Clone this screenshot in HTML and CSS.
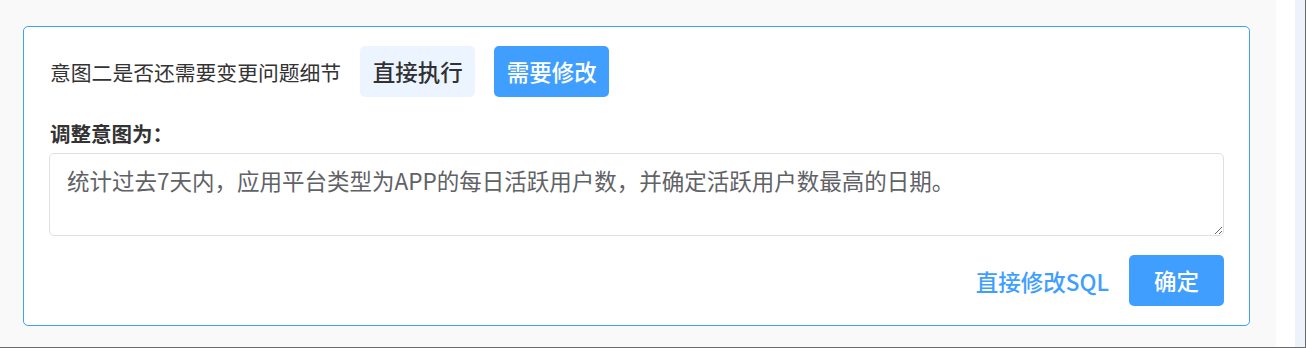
FILE: index.html
```html
<!DOCTYPE html>
<html lang="zh-CN">
<head>
<meta charset="utf-8">
<title>意图确认</title>
<link rel="stylesheet" href="styles.css">
</head>
<body>
<div class="screen">
  <main class="main">
    <section class="card">
      <div class="choice-row">
        <span class="question">意图二是否还需要变更问题细节</span>
        <button class="btn btn-light" type="button">直接执行</button>
        <button class="btn btn-primary" type="button">需要修改</button>
      </div>
      <label class="field-label" for="intent">调整意图为：</label>
      <textarea id="intent" class="intent">统计过去7天内，应用平台类型为APP的每日活跃用户数，并确定活跃用户数最高的日期。</textarea>
      <div class="actions">
        <a class="link" href="#">直接修改SQL</a>
        <button class="btn btn-primary btn-confirm" type="button">确定</button>
      </div>
    </section>
  </main>
  <aside class="side">
    <div class="side-gap"></div>
    <div class="side-bar"></div>
  </aside>
</div>
</body>
</html>
```

FILE: styles.css
```css
* {
  box-sizing: border-box;
}

html, body {
  margin: 0;
  padding: 0;
  background: #ffffff;
}

body {
  font-family: "Noto Sans CJK SC", "Noto Sans", "Liberation Sans", sans-serif;
  color: #303133;
}

.screen {
  width: 1306px;
  height: 348px;
  display: flex;
  border-right: 1px solid #6b6b6b;
  border-bottom: 1px solid #6b6b6b;
  overflow: hidden;
}

.main {
  width: 1276px;
  height: 100%;
  background: #f9f9f9;
  padding: 26px 0 0 23px;
}

.side {
  display: flex;
  height: 100%;
}

.side-gap {
  width: 19px;
  background: #ffffff;
}

.side-bar {
  width: 10px;
  background: #eef2fb;
}

.card {
  width: 1227px;
  height: 300px;
  background: #ffffff;
  border: 1px solid #409eff;
  border-radius: 5px;
  padding: 19px 25px;
  display: flex;
  flex-direction: column;
}

.choice-row {
  display: flex;
  align-items: center;
  height: 51px;
}

.question {
  font-size: 20.8px;
  color: #333333;
  margin-right: 19px;
  margin-left: 1px;
}

.btn {
  height: 51px;
  padding: 0 12.5px;
  border: none;
  border-radius: 5px;
  font-family: inherit;
  font-size: 22.5px;
  font-weight: 500;
  line-height: 51px;
  cursor: pointer;
}

.btn-light {
  background: #ecf5ff;
  color: #303133;
  margin-right: 19px;
}

.btn-primary {
  background: #409eff;
  color: #ffffff;
}

.field-label {
  font-size: 20.5px;
  font-weight: 700;
  color: #333333;
  line-height: 28px;
  margin: 22px 0 6px 1px;
}

.intent {
  width: 100%;
  height: 83px;
  border: 1px solid #dcdfe6;
  border-radius: 5px;
  padding: 9px 17px;
  font-family: inherit;
  font-size: 22.5px;
  line-height: 34px;
  color: #606266;
  resize: vertical;
  outline: none;
}

.actions {
  display: flex;
  justify-content: flex-end;
  align-items: center;
  gap: 20px;
  margin-top: 19px;
}

.link {
  font-size: 22.5px;
  font-weight: 500;
  color: #409eff;
  text-decoration: none;
}

.btn-confirm {
  width: 95px;
  padding: 0;
}
```
